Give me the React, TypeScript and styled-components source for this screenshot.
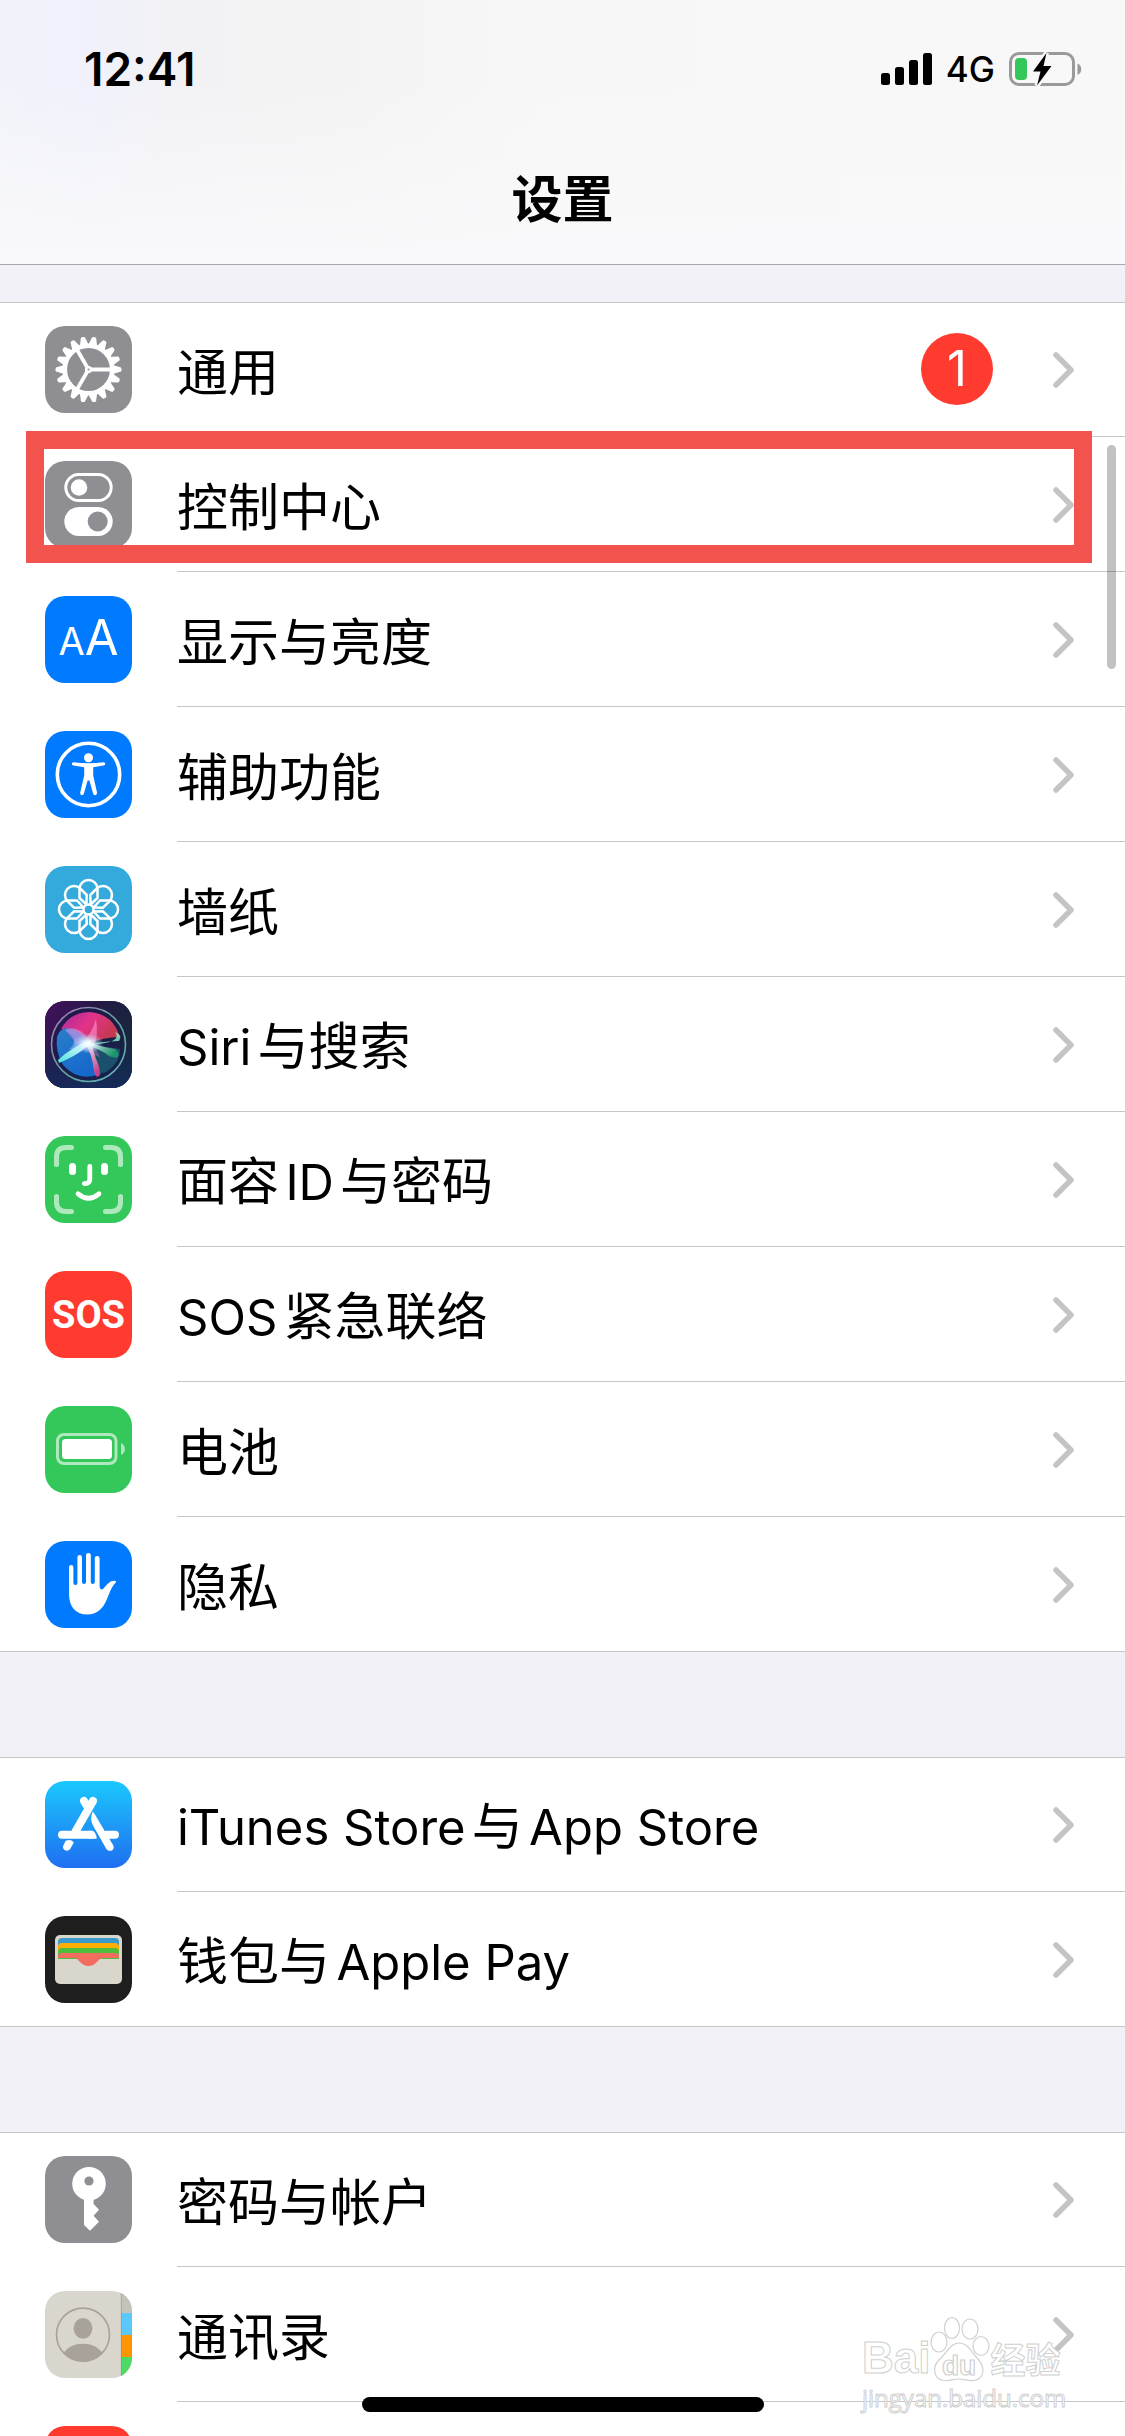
import React from 'react';
import styled, { createGlobalStyle } from 'styled-components';

const GlobalStyle = createGlobalStyle`
  *, *::before, *::after { box-sizing: border-box; }
  body {
    margin: 0;
    background: #f2f1f7;
    color: #000;
    font-family: Inter, "Noto Sans CJK SC", sans-serif;
  }
`;

const Screen = styled.div`
  position: relative;
  display: flex;
  flex-direction: column;
  height: 100vh;
  overflow: hidden;
`;

const Header = styled.header`
  flex: none;
  border-bottom: 1px solid #a9a8ad;
  background:
    linear-gradient(180deg, rgba(249, 249, 251, 0) 30%, #f9f9fb 100%),
    linear-gradient(90deg, #f2f3fa 0%, #f0f1fb 8%, #f2f2f5 16%, #f3f3f3 30%, #f7f7f7 48%, #f8f8f8 100%);
`;

const StatusBar = styled.div`
  display: flex;
  align-items: center;
  height: 138px;
  padding: 0 43px 0 84px;
`;

const Clock = styled.time`
  margin-right: auto;
  font-size: 46px;
  line-height: 48px;
  font-weight: 600;
`;

const StatusIcons = styled.div`
  display: flex;
  align-items: center;
  gap: 14px;
  font-size: 35px;
  line-height: 48px;
  font-weight: 500;
`;

const Title = styled.h1`
  margin: 0;
  height: 126px;
  padding-top: 26px;
  text-align: center;
  font-size: 51px;
  line-height: 72px;
  font-weight: 600;
`;

const Content = styled.main`
  display: flex;
  flex-direction: column;
  gap: 105px;
  flex: 1;
  min-height: 0;
  padding-top: 37px;
`;

const Group = styled.ul`
  flex: none;
  margin: 0;
  padding: 0;
  list-style: none;
  background: #fff;
  box-shadow: inset 0 1px #c6c6c9, inset 0 -1px #c6c6c9;
`;

const Item = styled.li`
  position: relative;
`;

const RowLink = styled.a`
  display: flex;
  align-items: center;
  gap: 45px;
  height: 135px;
  padding-left: 45px;
  color: inherit;
  text-decoration: none;
`;

const Tile = styled.span<{ $bg: string }>`
  flex: none;
  display: flex;
  align-items: center;
  justify-content: center;
  width: 87px;
  height: 87px;
  border-radius: 20px;
  overflow: hidden;
  background: ${p => p.$bg};
  color: #fff;

  svg { display: block; width: 100%; height: 100%; }
`;

const RowBody = styled.span<{ $divided: boolean }>`
  flex: 1;
  display: flex;
  align-items: center;
  gap: 60px;
  height: 100%;
  padding-right: 51px;
  box-shadow: ${p => (p.$divided ? 'inset 0 -1px #c6c6c9' : 'none')};
`;

const Label = styled.span`
  flex: 1;
  padding-top: 6px;
  font-size: 51px;
  line-height: 72px;
  text-autospace: normal;
`;

const Latin = styled.span`
  font-size: 49px;
`;

const Badge = styled.span`
  display: flex;
  align-items: center;
  justify-content: center;
  width: 72px;
  height: 72px;
  margin-bottom: 2px;
  border-radius: 50%;
  background: #ff3b30;
  color: #fff;
  font-size: 49px;
`;

const Highlight = styled.div`
  position: absolute;
  z-index: 1;
  inset: -6px 33px 9px 26px;
  border: 18px solid #f2534d;
  pointer-events: none;
`;

const ScrollThumb = styled.div`
  position: absolute;
  top: 445px;
  right: 9px;
  width: 9px;
  height: 224px;
  border-radius: 5px;
  background: rgba(0, 0, 0, 0.24);
`;

const HomeIndicator = styled.div`
  position: absolute;
  bottom: 24px;
  left: 50%;
  width: 402px;
  height: 15px;
  margin-left: -201px;
  border-radius: 8px;
  background: #000;
`;

const SosText = styled.span`
  font-family: Roboto, sans-serif;
  font-size: 38px;
  font-weight: 700;
`;

const SizeText = styled.span`
  display: flex;
  align-items: baseline;
  line-height: 60px;
`;
const SmallA = styled.span` font-size: 38px; `;
const LargeA = styled.span` font-size: 49px; `;

const Watermark = styled.div`
  position: absolute;
  right: 62px;
  bottom: 22px;
  width: 201px;
  color: #fff;
  -webkit-text-stroke: 1px #d0d0d0;
`;

const Brand = styled.div`
  display: flex;
  align-items: flex-end;
  height: 68px;
  font-family: "Liberation Sans", "Noto Sans CJK SC", sans-serif;
  font-weight: 700;
  svg { flex: none; width: 60px; height: 66px; }
`;
const BrandLatin = styled.span`
  font-size: 44px;
  line-height: 48px;
`;
const BrandHan = styled.span`
  font-size: 35px;
  line-height: 42px;
`;
const Site = styled.div`
  font-family: "Open Sans", sans-serif;
  font-size: 24px;
  line-height: 32px;
`;

const Signal = () => (
  <svg width="51" height="32" viewBox="0 0 51 32" aria-hidden="true">
    <rect x="0" y="20" width="9" height="12" rx="2.5" />
    <rect x="14" y="14" width="9" height="18" rx="2.5" />
    <rect x="28" y="7" width="9" height="25" rx="2.5" />
    <rect x="42" y="0" width="9" height="32" rx="2.5" />
  </svg>
);

const BatteryStatus = () => (
  <svg width="73" height="34" viewBox="0 0 73 34" aria-hidden="true">
    <rect x="1.5" y="1.5" width="63" height="31" rx="8.5" fill="none" stroke="#9a9a9b" strokeWidth="3" />
    <path d="M68.5 11.5c5 1.8 5 9.700 0 11.500z" fill="#9a9a9b" />
    <rect x="6" y="6" width="12" height="22" rx="4" fill="#34c759" />
    <path d="M37.500 1 24 19.500h7.500L28 33.500 42.500 14H34.500z" fill="#000" stroke="#f7f7f7" strokeWidth="5" paintOrder="stroke" />
  </svg>
);

const Chevron = () => (
  <svg width="21" height="36" viewBox="0 0 21 36" aria-hidden="true">
    <path d="M3 3l15 15L3 33" fill="none" stroke="#c4c4c6" strokeWidth="5.500" strokeLinecap="round" strokeLinejoin="round" />
  </svg>
);

const GearIcon = () => (
  <svg viewBox="-43.5 -43.5 87 87">
    <g fill="#fff">
      {Array.from({ length: 18 }, (_, i) => (
        <path key={i} d="M23-4h3L32.500-2Q33.600 0 32.500 2L26 4h-3z" transform={`rotate(${i * 20})`} />
      ))}
    </g>
    <circle r="23.700" fill="none" stroke="#fff" strokeWidth="4.600" />
    {[0, 120, 240].map(a => (
      <path key={a} d="M2 0H23" stroke="#fff" strokeWidth="3.800" transform={`rotate(${a})`} />
    ))}
    <circle r="3.600" fill="#fff" />
    <circle r="1" fill="#8e8e93" />
  </svg>
);

const SwitchesIcon = () => (
  <svg viewBox="0 0 87 87">
    <rect x="20.800" y="13.500" width="45.400" height="26" rx="13" fill="none" stroke="#fff" strokeWidth="3" />
    <circle cx="34" cy="26.500" r="8.300" fill="#fff" />
    <rect x="19.300" y="46" width="48.400" height="29" rx="14.500" fill="#fff" />
    <circle cx="52.700" cy="60.500" r="10" fill="#8e8e93" />
  </svg>
);

const AccessibilityIcon = () => (
  <svg viewBox="0 0 87 87" fill="#fff">
    <circle cx="43.500" cy="43.500" r="31.200" fill="none" stroke="#fff" strokeWidth="3.600" />
    <circle cx="43.500" cy="26.700" r="4.500" />
    <path d="M28.500 31.200Q43.500 33.500 58.500 31.200Q60.500 31.500 60.300 33Q60.200 34.300 58.500 34.600L48.200 36.300V44.500L52 61.500Q52.200 64 50.200 64.200Q48.500 64.200 48 62.300L44.400 49.500H42.600L39 62.300Q38.400 64.200 36.800 64.200Q34.800 64 35.200 61.500L39.200 44.500V36.300L28.500 34.600Q26.900 34.300 26.800 33Q26.800 31.400 28.500 31.200Z" />
  </svg>
);

const FlowerIcon = () => (
  <svg viewBox="-43.5 -43.5 87 87" fill="none" stroke="#fff" strokeWidth="2.500">
    {Array.from({ length: 8 }, (_, i) => (
      <path key={i} d="M-2-5L-9-11.500V-20.500A9 9 0 0 1 9-20.500V-11.500L2-5" strokeLinejoin="round" transform={`rotate(${i * 45})`} />
    ))}
    <circle r="5" />
  </svg>
);

const SiriIcon = () => (
  <svg viewBox="0 0 87 87">
    <defs>
      <linearGradient id="siri-bg" x1="0" y1="0" x2="1" y2="0.6">
        <stop offset="0" stopColor="#44105f" />
        <stop offset="0.500" stopColor="#231a44" />
        <stop offset="1" stopColor="#16293d" />
      </linearGradient>
      <linearGradient id="siri-low" x1="0" y1="0" x2="0" y2="1">
        <stop offset="0.400" stopColor="#152a5c" stopOpacity="0" />
        <stop offset="1" stopColor="#152a5c" stopOpacity="0.900" />
      </linearGradient>
      <linearGradient id="siri-ring" x1="0" y1="0" x2="1" y2="1">
        <stop offset="0" stopColor="#a77bb8" />
        <stop offset="0.600" stopColor="#5fa39b" />
        <stop offset="1" stopColor="#69b7c4" />
      </linearGradient>
      <linearGradient id="siri-pink" x1="0" y1="0" x2="1" y2="0.500">
        <stop offset="0" stopColor="#a72aa0" />
        <stop offset="0.500" stopColor="#e23387" />
        <stop offset="1" stopColor="#c23a4c" />
      </linearGradient>
      <linearGradient id="siri-blue" x1="0" y1="0" x2="0.600" y2="1">
        <stop offset="0" stopColor="#2a7fc8" />
        <stop offset="1" stopColor="#1668cc" />
      </linearGradient>
      <radialGradient id="siri-glow">
        <stop offset="0" stopColor="#fff" />
        <stop offset="0.350" stopColor="#e4fbff" stopOpacity="0.800" />
        <stop offset="1" stopColor="#a0d8ff" stopOpacity="0" />
      </radialGradient>
      <linearGradient id="siri-leg-l" x1="1" y1="0" x2="0" y2="1">
        <stop offset="0" stopColor="#fff" />
        <stop offset="1" stopColor="#4be0e0" />
      </linearGradient>
      <linearGradient id="siri-leg-r" x1="0" y1="0" x2="1" y2="0.500">
        <stop offset="0" stopColor="#fff" />
        <stop offset="1" stopColor="#1c9c6c" />
      </linearGradient>
      <linearGradient id="siri-leg-d" x1="0" y1="0" x2="0.300" y2="1">
        <stop offset="0" stopColor="#fff" />
        <stop offset="1" stopColor="#d9418e" />
      </linearGradient>
    </defs>
    <rect width="87" height="87" fill="url(#siri-bg)" />
    <rect width="87" height="87" fill="url(#siri-low)" />
    <circle cx="43.500" cy="43.500" r="37" fill="#1a1c48" fillOpacity="0.550" stroke="url(#siri-ring)" strokeWidth="1.600" />
    <path d="M16 28Q25 11 45 11Q68 13 75 36Q58 36 43 43Q36 32 16 28Z" fill="url(#siri-pink)" />
    <path d="M12 36Q14 28 22 27Q36 30 43 43L52 74Q32 80 18 64Q10 50 12 36Z" fill="url(#siri-blue)" />
    <path d="M43 43L75 48Q75 62 61 71L52 74Z" fill="#1b5c74" fillOpacity="0.800" />
    <path d="M20 29Q34 23 46 42Q32 50 24 48Q36 40 20 29Z" fill="#a9c7ff" fillOpacity="0.450" />
    <path d="M20 29Q30 24 40 33Q48 41 55 56L49 54Q36 50 20 29Z" fill="#e173d6" fillOpacity="0.380" />
    <path d="M51 18Q54 34 48 48L36 44Q46 34 51 18Z" fill="#ff8fd0" fillOpacity="0.600" />
    <path d="M34 46Q54 40 74 40Q78 34 70 31Q76 39 60 42Q48 44 34 46Z" fill="#86f2d0" fillOpacity="0.800" />
    <path d="M43 40Q52 45 70 48Q75 51 73 56Q67 58 60 52Q50 46 41 45Z" fill="url(#siri-leg-r)" fillOpacity="0.900" />
    <path d="M46 39Q42 50 14 62L13 59Q28 45 46 39Z" fill="url(#siri-leg-l)" />
    <path d="M40 42Q47 52 49 70Q51 79 55 74Q55 66 51 58Q48 50 47 42Z" fill="url(#siri-leg-d)" fillOpacity="0.900" />
    <ellipse cx="43" cy="42.500" rx="16" ry="10" fill="url(#siri-glow)" />
  </svg>
);

const FaceIcon = () => (
  <svg viewBox="0 0 87 87" fill="none" strokeLinecap="round">
    <path d="M11.500 28.500V21Q11.500 11.500 21 11.500H26.500M60.500 11.500H66Q75.500 11.500 75.500 21V28.500M75.500 60.500V66Q75.500 75.500 66 75.500H60.500M26.500 75.500H21Q11.500 75.500 11.500 66V60.500" stroke="#aee9bd" strokeWidth="5" />
    <path d="M27.500 30.500V35.500M59.500 30.500V35.500" stroke="#fff" strokeWidth="7" />
    <path d="M44.800 30.500V43Q44.800 47.600 40 47.600H39.300" stroke="#fff" strokeWidth="4.800" />
    <path d="M33 57.800Q43.500 66.500 54 57.800" stroke="#fff" strokeWidth="4.800" />
  </svg>
);

const BatteryIcon = () => (
  <svg viewBox="0 0 87 87">
    <rect x="12.500" y="28.500" width="58.500" height="29" rx="6.500" fill="none" stroke="#aee9bd" strokeWidth="3" />
    <rect x="17" y="33" width="50" height="20" rx="3.500" fill="#fff" />
    <path d="M76 37c5.300 2 5.300 10 0 12z" fill="#aee9bd" />
  </svg>
);

const HandIcon = () => (
  <svg viewBox="0 0 87 87" fill="#fff">
    <path d="M24 53V26.200a2.200 2.200 0 0 1 4.400 0V42a2 2 0 0 0 4 0V16.400a2.300 2.300 0 0 1 4.600 0V41a2 2 0 0 0 4 0V14.300a2.400 2.400 0 0 1 4.800 0V41a2 2 0 0 0 4 0V17.300a2.400 2.400 0 0 1 4.800 0V45C54.800 48.500 57 49.500 59 47C62.500 42.500 66 39 70 39.800Q71.800 40.300 70.800 41.500C66 46.500 65 51 62 58C58 68 51.500 73.500 42.500 73.500C31 73.500 24 66 24 53Z" />
  </svg>
);

const AppStoreIcon = () => (
  <svg viewBox="0 0 87 87" fill="#fff">
    <g fill="none" stroke="#fff" strokeWidth="8" strokeLinecap="round">
      <path d="M48 20L30.500 50.500M39 20L42 25M17 53.700H46M62 53.700H70" />
    </g>
    <path d="M44 49.700H47Q51.500 51.500 51.700 57.700H44Z" />
    <path d="M47.800 30.500Q50.500 34 52 37L68.300 64.500Q69.500 67.500 67 69.400Q63.800 70.700 61.500 68.300L48 44.500Q44.500 37.500 47.800 30.500Z" />
    <path d="M20.700 59.800Q26 57.800 28.800 61.500L25.200 68Q22.800 71 19.500 69Q17.300 67.300 18.300 64.500Z" />
  </svg>
);

const WalletIcon = () => (
  <svg viewBox="0 0 87 87">
    <rect x="10" y="19" width="67" height="49" rx="5" fill="#d9d7cc" />
    <path d="M13 43V26q0-4 4-4H70q4 0 4 4V43z" fill="#3c99cc" />
    <path d="M13 43V31q0-4 4-4H70q4 0 4 4V43z" fill="#ffae03" />
    <path d="M13 43V36q0-4 4-4H70q4 0 4 4V43z" fill="#50be3d" />
    <path d="M13 42V41q0-4 4-4H70q4 0 4 4V42H57C54 42 51 50 43.500 50S33 42 30 42z" fill="#f26d5f" />
  </svg>
);

const KeyIcon = () => (
  <svg viewBox="0 0 87 87">
    <circle cx="44" cy="27.700" r="16.800" fill="#fff" />
    <path d="M39 40H48.600V48L54 53.700L48.600 59.700L54 65.700L45 74.700L39 69Z" fill="#fff" />
    <circle cx="44" cy="25" r="4.600" fill="#8e8e93" />
  </svg>
);

const ContactsIcon = () => (
  <svg viewBox="0 0 87 87">
    <defs>
      <clipPath id="contact-disc"><circle cx="38" cy="43.700" r="27" /></clipPath>
    </defs>
    <rect x="76" width="11" height="22" fill="#c5c2ba" />
    <rect x="76" y="22" width="11" height="22" fill="#5ac8fa" />
    <rect x="76" y="44" width="11" height="22" fill="#ff9500" />
    <rect x="76" y="66" width="11" height="21" fill="#4cd964" />
    <path d="M76.300 0V87" stroke="#8d8a84" strokeOpacity="0.500" />
    <circle cx="38" cy="43.700" r="26.500" fill="none" stroke="#a9a29b" strokeWidth="1.700" />
    <ellipse cx="38" cy="37.300" rx="9.400" ry="10.400" fill="#a9a29b" />
    <ellipse cx="38" cy="68" rx="21" ry="15.300" fill="#a9a29b" clipPath="url(#contact-disc)" />
  </svg>
);

const Paw = () => (
  <svg viewBox="0 0 60 66" fill="#fff" stroke="#d0d0d0" strokeWidth="1.200" aria-hidden="true">
    <ellipse cx="9" cy="26" rx="8" ry="10" />
    <ellipse cx="22" cy="12" rx="7.500" ry="10.500" />
    <ellipse cx="40" cy="13" rx="8" ry="10" />
    <ellipse cx="51" cy="30" rx="8" ry="9.500" />
    <path d="M29 27C38 27 41 36 48 43C56 52 54 64 43 64.500C37 65 35 63 29 63C23 63 20 65 15 64.500C3 64 2 51 9 44C17 37 20 27 29 27Z" />
    <text x="29" y="59" textAnchor="middle" fontSize="28" fontWeight="700">du</text>
  </svg>
);

type RowData = {
  name: string;
  bg: string;
  icon?: React.ReactNode;
  label?: React.ReactNode;
  badge?: number;
  highlighted?: boolean;
};

const groups: RowData[][] = [
  [
    { name: 'general', bg: '#8e8e93', icon: <GearIcon />, label: '通用', badge: 1 },
    { name: 'control', bg: '#8e8e93', icon: <SwitchesIcon />, label: '控制中心', highlighted: true },
    {
      name: 'display',
      bg: '#007aff',
      icon: <SizeText aria-hidden="true"><SmallA>A</SmallA><LargeA>A</LargeA></SizeText>,
      label: '显示与亮度',
    },
    { name: 'accessibility', bg: '#007aff', icon: <AccessibilityIcon />, label: '辅助功能' },
    { name: 'wallpaper', bg: '#34aadc', icon: <FlowerIcon />, label: '墙纸' },
    { name: 'siri', bg: '#1c1f3d', icon: <SiriIcon />, label: <><Latin>Siri</Latin>与搜索</> },
    { name: 'faceid', bg: '#34c759', icon: <FaceIcon />, label: <>面容<Latin>ID</Latin>与密码</> },
    {
      name: 'sos',
      bg: '#ff3b30',
      icon: <SosText aria-hidden="true">SOS</SosText>,
      label: <><Latin>SOS</Latin>紧急联络</>,
    },
    { name: 'battery', bg: '#34c759', icon: <BatteryIcon />, label: '电池' },
    { name: 'privacy', bg: '#007aff', icon: <HandIcon />, label: '隐私' },
  ],
  [
    {
      name: 'store',
      bg: 'linear-gradient(#1bc8fc, #1f6ef1)',
      icon: <AppStoreIcon />,
      label: <><Latin>iTunes Store</Latin>与<Latin>App Store</Latin></>,
    },
    { name: 'wallet', bg: '#1e1e1e', icon: <WalletIcon />, label: <>钱包与<Latin>Apple Pay</Latin></> },
  ],
  [
    { name: 'passwords', bg: '#8e8e93', icon: <KeyIcon />, label: '密码与帐户' },
    { name: 'contacts', bg: '#d9d7cd', icon: <ContactsIcon />, label: '通讯录' },
    { name: 'next', bg: '#ff3b30' },
  ],
];

export default function App() {
  return (
    <Screen>
      <GlobalStyle />
      <Header>
        <StatusBar>
          <Clock>12:41</Clock>
          <StatusIcons>
            <Signal />
            <span>4G</span>
            <BatteryStatus />
          </StatusIcons>
        </StatusBar>
        <Title>设置</Title>
      </Header>
      <Content>
        {groups.map(rows => (
          <Group key={rows[0].name}>
            {rows.map((row, i) => (
              <Item key={row.name}>
                <RowLink href={`#${row.name}`}>
                  <Tile $bg={row.bg}>{row.icon}</Tile>
                  <RowBody $divided={i < rows.length - 1}>
                    <Label>{row.label}</Label>
                    {row.badge !== undefined && <Badge>{row.badge}</Badge>}
                    <Chevron />
                  </RowBody>
                </RowLink>
                {row.highlighted && <Highlight />}
              </Item>
            ))}
          </Group>
        ))}
      </Content>
      <ScrollThumb />
      <Watermark>
        <Brand>
          <BrandLatin>Bai</BrandLatin>
          <Paw />
          <BrandHan>经验</BrandHan>
        </Brand>
        <Site>jingyan.baidu.com</Site>
      </Watermark>
      <HomeIndicator />
    </Screen>
  );
}
